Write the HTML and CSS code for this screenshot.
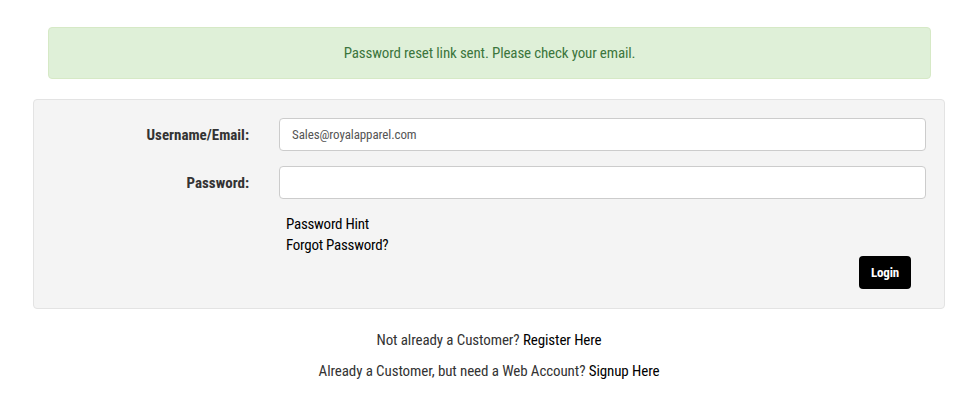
FILE: index.html
```html
<!DOCTYPE html>
<html lang="en">
<head>
    <meta charset="UTF-8">
    <meta name="viewport" content="width=device-width, initial-scale=1.0">
    <title>Login</title>
    <link rel="stylesheet" href="styles.css">
</head>
<body>
<div class="page">
    <div class="alert">Password reset link sent. Please check your email.</div>

    <form class="login-panel">
        <div class="form-row">
            <label class="form-label" for="username">Username/Email:</label>
            <input class="form-input" id="username" type="text" value="Sales@royalapparel.com">
        </div>
        <div class="form-row">
            <label class="form-label" for="password">Password:</label>
            <input class="form-input" id="password" type="password">
        </div>
        <div class="links">
            <a href="#">Password Hint</a>
            <a href="#">Forgot Password?</a>
        </div>
        <div class="actions">
            <button type="button" class="btn-login">Login</button>
        </div>
    </form>

    <div class="footer-links">
        <p>Not already a Customer? <a href="#">Register Here</a></p>
        <p>Already a Customer, but need a Web Account? <a href="#">Signup Here</a></p>
    </div>
</div>
</body>
</html>
```

FILE: styles.css
```css
/* Login page */
body {
    margin: 0;
    background-color: #fff;
    font-family: "Liberation Sans Narrow", "Roboto Condensed", "DejaVu Sans Condensed", sans-serif;
    color: #333;
}
a {
    color: #000;
    text-decoration: none;
}
.page {
    padding: 27px 29px 0 33px;
}
.alert {
    margin: 0 14px 20px 15px;
    height: 50px;
    display: flex;
    align-items: center;
    justify-content: center;
    background-color: #dff0d8;
    border: 1px solid #d6e9c6;
    border-radius: 4px;
    color: #3c763d;
    font-size: 15px;
    letter-spacing: -0.15px;
}
.login-panel {
    margin: 0;
    padding: 18px 18px 19px 0;
    background-color: #f4f4f4;
    border: 1px solid #e3e3e3;
    border-radius: 4px;
}
.form-row {
    display: grid;
    grid-template-columns: 215px 1fr;
    column-gap: 30px;
    align-items: center;
    margin-bottom: 15px;
}
.form-label {
    text-align: right;
    font-weight: bold;
    font-size: 15px;
    color: #333;
}
.form-input {
    box-sizing: border-box;
    width: 100%;
    height: 33px;
    padding: 0 12px;
    border: 1px solid #ccc;
    border-radius: 4px;
    background-color: #fff;
    font-family: inherit;
    font-size: 13px;
    letter-spacing: -0.1px;
    color: #555;
}
.links {
    display: flex;
    flex-direction: column;
    margin: 13px 0 0 252px;
    font-size: 15px;
    letter-spacing: -0.25px;
    line-height: 21px;
}
.actions {
    display: flex;
    justify-content: flex-end;
    padding-right: 15px;
}
.btn-login {
    height: 33px;
    padding: 0 12px;
    background-color: #000;
    color: #fff;
    border: none;
    border-radius: 4px;
    font-family: inherit;
    font-weight: bold;
    font-size: 13px;
    letter-spacing: -0.2px;
    cursor: pointer;
}
.footer-links {
    text-align: center;
    font-size: 15px;
    letter-spacing: -0.1px;
    padding-top: 22px;
}
.footer-links p {
    margin: 0 0 13px;
    line-height: 18px;
}
```
